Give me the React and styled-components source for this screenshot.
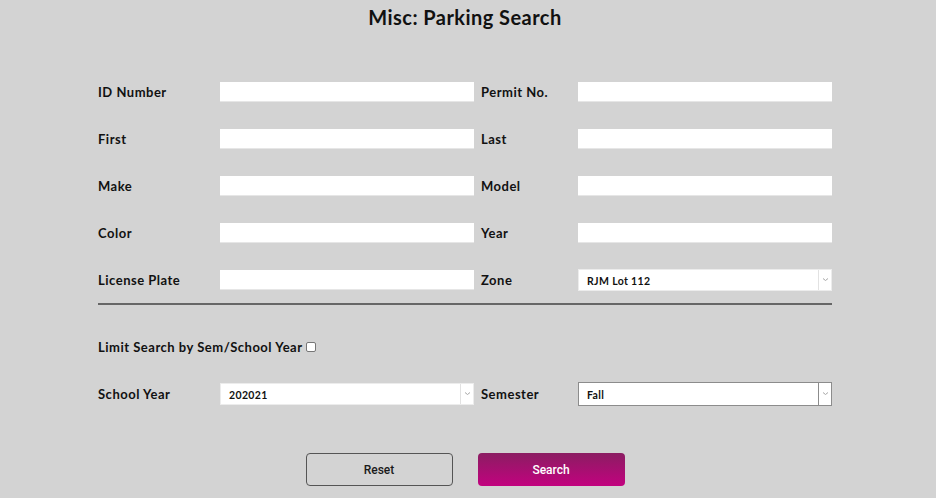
import styled, { createGlobalStyle } from 'styled-components';

const GlobalStyle = createGlobalStyle`
    html, body {
        margin: 0;
        padding: 0;
        background: #d3d3d3;
    }
    body {
        font-family: "Lato", "Open Sans", sans-serif;
        color: #111;
    }
`

const Page = styled.div`
    width: 930px;
    display: flex;
    flex-direction: column;
    align-items: center;
`

const Title = styled.h1`
    margin: 0;
    padding-top: 5px;
    height: 27px;
    line-height: 24px;
    font-size: 20px;
    font-weight: 700;
    letter-spacing: 0.45px;
    color: #111;
`

const Form = styled.div`
    width: 734px;
    margin-top: 36px;
    display: flex;
    flex-direction: column;
`

const FieldGrid = styled.div`
    display: grid;
    grid-template-columns: 122px 254px 104px 254px;
    grid-auto-rows: 47px;
    align-items: center;

    & > :nth-child(4n + 3) {
        padding-left: 7px;
    }
`

const Label = styled.label`
    font-size: 13px;
    font-weight: 700;
    letter-spacing: 0.5px;
    color: #111;
    white-space: nowrap;
`

const TextInput = styled.input`
    box-sizing: border-box;
    width: 254px;
    height: 20px;
    margin: 0;
    border: none;
    border-bottom: 1px solid #e6e6e6;
    background: #fff;
    outline: none;
`

const SelectBox = styled.div`
    box-sizing: border-box;
    width: 254px;
    height: ${({ $outlined }) => ($outlined ? '24px' : '22px')};
    display: flex;
    background: #fff;
    border: 1px solid ${({ $outlined }) => ($outlined ? '#8c8c8c' : '#ececec')};
`

const SelectValue = styled.span`
    flex: 1;
    display: flex;
    align-items: center;
    padding: 2px 0 0 8px;
    font-size: 10.5px;
    font-weight: 700;
    letter-spacing: 0.35px;
    color: #111;
`

const SelectArrow = styled.span`
    width: 12px;
    display: flex;
    align-items: center;
    justify-content: center;
    border-left: 1px solid ${({ $outlined }) => ($outlined ? '#8c8c8c' : '#e2e2e2')};
`

const Divider = styled.hr`
    margin: 0;
    border: none;
    height: 2px;
    background: #666;
`

const LimitRow = styled.div`
    margin-top: 18px;
    height: 47px;
    display: flex;
    align-items: center;
`

const Checkbox = styled.input`
    appearance: none;
    box-sizing: border-box;
    width: 10px;
    height: 10px;
    margin: 1px 0 0 3px;
    border: 1px solid #767676;
    border-radius: 2px;
    background: #fff;
`

const Actions = styled.div`
    margin-top: 36px;
    display: flex;
    justify-content: center;
    gap: 25px;
`

const Button = styled.button`
    box-sizing: border-box;
    width: 147px;
    height: 33px;
    border-radius: 4px;
    font-family: "Roboto", "Liberation Sans", sans-serif;
    font-size: 12px;
    font-weight: 500;
    cursor: pointer;
    border: ${({ $primary }) => ($primary ? 'none' : '1px solid #555')};
    color: ${({ $primary }) => ($primary ? '#fff' : '#1a1a1a')};
    background: ${({ $primary }) =>
        $primary ? 'linear-gradient(to bottom, #8b1d62, #c2027f)' : 'transparent'};
`

function Chevron() {
    return (
        <svg width="7" height="5" viewBox="0 0 7 5">
            <polyline points="1,1.5 3.5,3.5 6,1.5" fill="none" stroke="#a8a8a8" strokeWidth="1" />
        </svg>
    )
}

function Select({ value, outlined }) {
    return (
        <SelectBox $outlined={outlined}>
            <SelectValue>{value}</SelectValue>
            <SelectArrow $outlined={outlined}><Chevron /></SelectArrow>
        </SelectBox>
    )
}

const rows = [
    ['ID Number', 'Permit No.'],
    ['First', 'Last'],
    ['Make', 'Model'],
    ['Color', 'Year'],
]

function App() {
    return (
        <Page>
            <GlobalStyle />
            <Title>Misc: Parking Search</Title>
            <Form>
                <FieldGrid>
                    {rows.map(([left, right]) => [
                        <Label key={left}>{left}</Label>,
                        <TextInput key={left + '-in'} />,
                        <Label key={right}>{right}</Label>,
                        <TextInput key={right + '-in'} />,
                    ])}
                    <Label>License Plate</Label>
                    <TextInput />
                    <Label>Zone</Label>
                    <Select value="RJM Lot 112" />
                </FieldGrid>
                <Divider />
                <LimitRow>
                    <Label>Limit Search by Sem/School Year</Label>
                    <Checkbox type="checkbox" />
                </LimitRow>
                <FieldGrid>
                    <Label>School Year</Label>
                    <Select value="202021" />
                    <Label>Semester</Label>
                    <Select value="Fall" outlined />
                </FieldGrid>
                <Actions>
                    <Button>Reset</Button>
                    <Button $primary>Search</Button>
                </Actions>
            </Form>
        </Page>
    )
}

export default App;
